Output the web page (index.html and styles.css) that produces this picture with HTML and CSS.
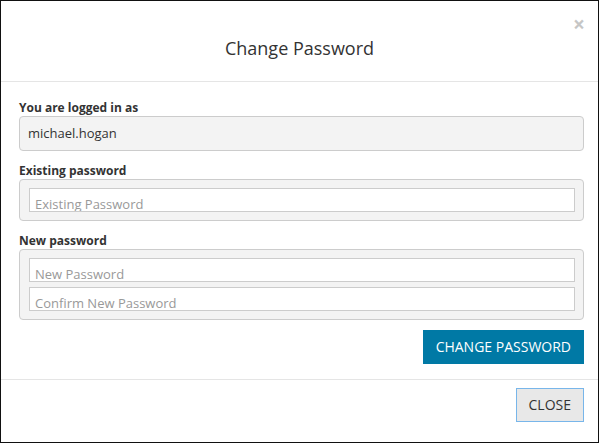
FILE: index.html
```html
<!DOCTYPE html>
<html>
<head>
<meta charset="utf-8">
<link rel="stylesheet" href="styles.css">
</head>
<body>
<div class="modal">
  <div class="modal-header">
    <h4 class="modal-title">Change Password</h4>
    <button class="close" type="button">&times;</button>
  </div>
  <div class="modal-body">
    <div class="group">
      <label class="label">You are logged in as</label>
      <div class="readonly">michael.hogan</div>
    </div>
    <div class="group">
      <label class="label">Existing password</label>
      <div class="well">
        <input class="input" type="password" placeholder="Existing Password">
      </div>
    </div>
    <div class="group">
      <label class="label">New password</label>
      <div class="well">
        <input class="input" type="password" placeholder="New Password">
        <input class="input" type="password" placeholder="Confirm New Password">
      </div>
    </div>
    <div class="actions">
      <button class="btn btn-primary" type="button">CHANGE PASSWORD</button>
    </div>
  </div>
  <div class="modal-footer">
    <button class="btn btn-default" type="button">CLOSE</button>
  </div>
</div>
</body>
</html>
```

FILE: styles.css
```css
* { box-sizing: border-box; }
html, body { margin: 0; padding: 0; }
body {
  font-family: "Open Sans", "Noto Sans", sans-serif;
  color: #333;
  background: #fff;
}
.modal {
  width: 599px;
  height: 443px;
  border: 1px solid #111;
  display: flex;
  flex-direction: column;
}
.modal-header {
  position: relative;
  height: 81px;
  padding-top: 35px;
  border-bottom: 1px solid #e5e5e5;
  text-align: center;
}
.modal-title {
  margin: 0;
  font-size: 18px;
  line-height: 24px;
  font-weight: 400;
  color: #333;
}
.close {
  position: absolute;
  top: 11px;
  right: 13px;
  padding: 0;
  border: 0;
  background: transparent;
  font-family: "Open Sans", sans-serif;
  font-size: 21px;
  font-weight: 700;
  line-height: 24px;
  color: #000;
  opacity: 0.22;
  cursor: pointer;
}
.modal-body {
  padding: 17px 14px 15px 18px;
  display: flex;
  flex-direction: column;
}
.group {
  display: flex;
  flex-direction: column;
  margin-bottom: 11px;
}
.label {
  font-size: 12px;
  line-height: 17px;
  font-weight: 700;
  color: #333;
}
.readonly {
  height: 35px;
  padding: 0 8px;
  border: 1px solid #ccc;
  border-radius: 4px;
  background: #f3f3f3;
  font-size: 13px;
  line-height: 33px;
  color: #333;
}
.well {
  display: flex;
  flex-direction: column;
  gap: 5px;
  padding: 8px 8px 8px 9px;
  border: 1px solid #ccc;
  border-radius: 4px;
  background: #f3f3f3;
}
.input {
  height: 24px;
  margin: 0;
  padding: 7px 5px 0;
  border: 1px solid #ccc;
  border-radius: 0;
  background: #fff;
  font-family: "Open Sans", sans-serif;
  font-size: 13px;
  line-height: 16px;
  color: #333;
  outline: none;
}
.input::placeholder { color: #999; opacity: 1; }
.actions {
  display: flex;
  justify-content: flex-end;
  margin-top: -1px;
}
.btn {
  height: 34px;
  padding: 0 12px;
  font-family: "Open Sans", sans-serif;
  font-size: 14px;
  line-height: 20px;
  border-radius: 0;
  cursor: pointer;
}
.btn-primary {
  background: #0079a5;
  border: 1px solid #0079a5;
  color: #fff;
}
.btn-default {
  background: #e8e8e8;
  border: 1px solid #78b6ea;
  color: #333;
}
.modal-footer {
  flex: 1;
  display: flex;
  justify-content: flex-end;
  align-items: flex-start;
  padding: 8px 14px 0 18px;
  border-top: 1px solid #e5e5e5;
}
```
